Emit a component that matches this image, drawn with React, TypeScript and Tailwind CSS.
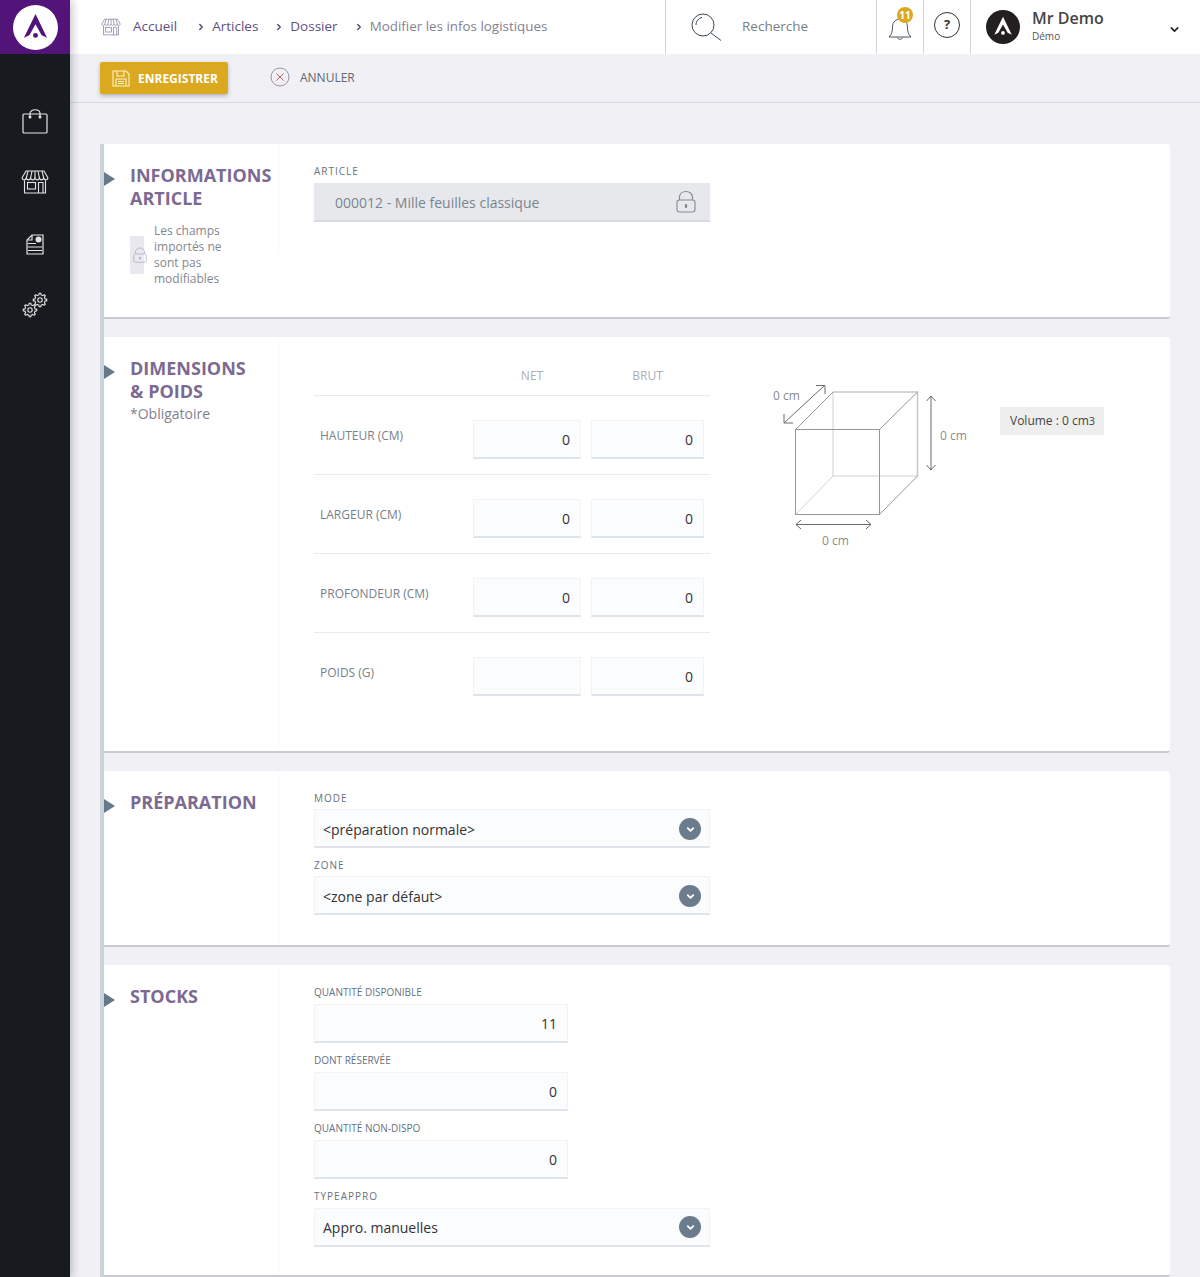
import { ChevronDown, ChevronRight } from "lucide-react";
import type { ReactNode } from "react";

function Logo({ size, fill, bg }: { size: number; fill: string; bg: string }) {
  return (
    <svg width={size} height={size} viewBox="0 0 44 44">
      <circle cx="22" cy="22" r="22" fill={bg} />
      <path d="M22 8.7 L33.3 32 L28 29.5 L22 18.7 L16 29.5 L10.7 32 Z" fill={fill} />
      <circle cx="22" cy="29.7" r="2.4" fill={fill} />
    </svg>
  );
}

function StoreIcon({ size, color }: { size: number; color: string }) {
  return (
    <svg width={size} height={size} viewBox="0 0 28 24" fill="none" stroke={color} strokeWidth="1.1">
      <path d="M5 1 H23 L27 8 C26 10.5 23.5 10.5 22.7 8 C22 10.5 19 10.5 18.4 8 C17.5 10.5 15 10.5 14 8 C13 10.5 10.5 10.5 9.6 8 C9 10.5 6 10.5 5.3 8 C4.5 10.5 2 10.5 1 8 Z" />
      <path d="M9.6 8 L11 1 M18.4 8 L17 1 M5.3 8 L7 1 M22.7 8 L21 1 M14 8 V1" />
      <path d="M3.5 10.5 V23 H24.5 V10.5" />
      <rect x="6.5" y="12.5" width="8" height="6.5" />
      <path d="M17.5 23 V12.5 H22 V23" />
    </svg>
  );
}

function BagIcon() {
  return (
    <svg width="26" height="25" viewBox="0 0 26 25" fill="none" stroke="#e4e4e4" strokeWidth="1.2">
      <rect x="1" y="5" width="24" height="19" rx="1" />
      <path d="M8 7.5 V4.5 C8 -0.5 18 -0.5 18 4.5 V7.5" />
      <circle cx="8" cy="8" r="0.9" fill="#e4e4e4" />
      <circle cx="18" cy="8" r="0.9" fill="#e4e4e4" />
    </svg>
  );
}

function InvoiceIcon() {
  return (
    <svg width="18" height="21" viewBox="0 0 18 21" fill="none" stroke="#e4e4e4" strokeWidth="1.2">
      <path d="M6 1 H17 V20 H1 V6 Z" />
      <path d="M6 1 V6 H1" />
      <path d="M2 9.5 H10 M2 13 H16 M2 16.5 H16" />
      <circle cx="12.5" cy="5.5" r="3" fill="#e4e4e4" stroke="none" />
    </svg>
  );
}

function gearPath(cx: number, cy: number) {
  const teeth = 8;
  const points: string[] = [];
  for (let i = 0; i < teeth; i++) {
    const a = (i / teeth) * Math.PI * 2;
    const step = Math.PI / teeth;
    [
      [5.2, a - step * 0.55],
      [6.8, a - step * 0.3],
      [6.8, a + step * 0.3],
      [5.2, a + step * 0.55],
    ].forEach(([r, t]) => {
      points.push(`${(cx + r * Math.cos(t)).toFixed(2)} ${(cy + r * Math.sin(t)).toFixed(2)}`);
    });
  }
  return `M${points.join(" L")} Z`;
}

function GearsIcon() {
  return (
    <svg width="26" height="26" viewBox="0 0 26 26" fill="none" stroke="#e4e4e4" strokeWidth="1.1">
      <path d={gearPath(18, 8)} />
      <circle cx="18" cy="8" r="2.2" />
      <path d={gearPath(8, 18)} />
      <circle cx="8" cy="18" r="2.2" />
    </svg>
  );
}

function LockIcon({ w, h, color }: { w: number; h: number; color: string }) {
  return (
    <svg width={w} height={h} viewBox="0 0 20 23" fill="none" stroke={color} strokeWidth="1.1" className="shrink-0">
      <path d="M3.5 10 V7.5 C3.5 -0.5 16.5 -0.5 16.5 7.5 V10" />
      <rect x="1" y="10" width="18" height="12" rx="2.5" />
      <rect x="8.8" y="14" width="2.4" height="4" rx="1" fill={color} stroke="none" />
    </svg>
  );
}

function SaveIcon() {
  return (
    <svg width="18" height="17" viewBox="0 0 18 17" fill="none" stroke="#fdf3c8" strokeWidth="1.1">
      <path d="M1 1 H14 L17 4 V16 H1 Z" />
      <path d="M5 1 V6 H12 V1" />
      <path d="M4 9 H14 V16 M4 9 V16 M6 11.5 H12 M6 13.5 H12" />
    </svg>
  );
}

function Sidebar() {
  return (
    <aside className="w-[70px] shrink-0 bg-[#171b1f] shadow-[3px_0_8px_rgba(0,0,0,0.2)] z-10">
      <div className="h-[54px] bg-[#53147a] flex items-center justify-center">
        <Logo size={45} fill="#53147a" bg="#ffffff" />
      </div>
      <nav className="flex flex-col items-center">
        <div className="h-[25px] mt-[55px] flex items-center"><BagIcon /></div>
        <div className="h-[28px] mt-[34px] flex items-center"><StoreIcon size={28} color="#e4e4e4" /></div>
        <div className="h-[21px] mt-[38px] flex items-center"><InvoiceIcon /></div>
        <div className="h-[26px] mt-[37px] flex items-center"><GearsIcon /></div>
      </nav>
    </aside>
  );
}

function Crumb({ label, muted }: { label: string; muted?: boolean }) {
  return (
    <>
      <ChevronRight size={10} strokeWidth={3} className="text-[#4a3a6a] mr-[6px]" />
      <span className={muted ? "text-[#857f92]" : "text-[#5f4f80]"}>{label}</span>
    </>
  );
}

function Header() {
  return (
    <header className="h-[54px] bg-white flex items-stretch text-[13.5px]">
      <div className="w-[595px] flex items-center pl-[31px] pb-[1px]">
        <StoreIcon size={20} color="#8d84a5" />
        <span className="ml-[12px] text-[#5f4f80] mr-[19px]">Accueil</span>
        <Crumb label="Articles" />
        <span className="w-[16px]" />
        <Crumb label="Dossier" />
        <span className="w-[16px]" />
        <span className="contents text-[13.4px]">
          <Crumb label="Modifier les infos logistiques" muted />
        </span>
      </div>
      <div className="w-[211px] border-l border-[#cdd5dc] flex items-center pl-[25px] pb-[1px]">
        <svg width="31" height="28" viewBox="0 0 31 28" fill="none" stroke="#3f4a55" strokeWidth="1">
          <circle cx="12" cy="12" r="11" />
          <path d="M20 20 L30 27.5" />
          <path d="M5 12 C5 8 8 5 11 4.5" />
        </svg>
        <span className="ml-[20px] text-[#76808a]">Recherche</span>
      </div>
      <div className="w-[47px] border-l border-[#cdd5dc] relative flex items-center justify-center">
        <svg width="24" height="24" viewBox="0 0 24 24" fill="none" stroke="#4a5560" strokeWidth="1" className="mt-[3px]">
          <path d="M1 20 C4 17 4.5 14 4.5 10 C4.5 5 8 2 12 2 C16 2 19.5 5 19.5 10 C19.5 14 20 17 23 20 Z" />
          <path d="M9.5 20.5 C10 23 14 23 14.5 20.5" />
        </svg>
        <span className="absolute left-[20px] top-[7px] w-[16px] h-[16px] rounded-full bg-[#daa920] text-white text-[10px] font-bold flex items-center justify-center">11</span>
      </div>
      <div className="w-[47px] border-l border-[#cdd5dc] flex items-center justify-center">
        <span className="w-[26px] h-[26px] -mt-[4px] rounded-full border border-[#333] text-[#333] text-[13px] font-bold flex items-center justify-center">?</span>
      </div>
      <div className="flex-1 border-l border-[#cdd5dc] flex items-center pl-[15px] relative">
        <Logo size={34} fill="#ffffff" bg="#231f20" />
        <div className="ml-[12px] -mt-[4px]">
          <div className="text-[16px] leading-[21px] font-semibold text-[#454545]">Mr Demo</div>
          <div className="text-[10px] leading-[14px] text-[#555]">Démo</div>
        </div>
        <ChevronDown size={13} strokeWidth={3} className="absolute left-[197px] top-[23px] text-[#222]" />
      </div>
    </header>
  );
}

function Toolbar() {
  return (
    <div className="h-[49px] border-b border-[#d3d9df] flex items-start pl-[30px] pt-[8px]">
      <button className="w-[128px] h-[32px] bg-[#daa920] rounded-[2px] shadow-[0_2px_4px_rgba(0,0,0,0.25)] flex items-center pl-[12px] text-white text-[12px] font-bold">
        <SaveIcon />
        <span className="ml-[8px] mt-[1px]">ENREGISTRER</span>
      </button>
      <div className="flex items-center ml-[42px] h-[30px] text-[12px] text-[#5f6670]">
        <svg width="20" height="20" viewBox="0 0 20 20" fill="none" stroke="#9a8fa8" strokeWidth="1">
          <circle cx="10" cy="10" r="9" />
          <path d="M6.5 6.5 L13.5 13.5 M13.5 6.5 L6.5 13.5" stroke="#b5606a" />
        </svg>
        <span className="ml-[10px] mt-[2px]">ANNULER</span>
      </div>
    </div>
  );
}

function Card({ title, height, sub, ruleHeight, children }: { title: ReactNode; height: string; sub?: ReactNode; ruleHeight?: string; children: ReactNode }) {
  return (
    <section className={`${height} bg-white rounded-br-[3px] rounded-tr-[3px] border-b-2 border-[#cbc9d0] flex`}>
      <div className={`w-[175px] shrink-0 border-r border-[#f8f8fa] pt-[20px] flex items-start ${ruleHeight ?? ""}`}>
        <span className="w-0 h-0 mt-[8px] border-y-[7px] border-y-transparent border-l-[11px] border-l-[#65798a]" />
        <div className="ml-[15px] whitespace-nowrap">
          <h2 className="text-[18px] leading-[23px] font-bold text-[#7c6a92]">{title}</h2>
          {sub}
        </div>
      </div>
      <div className="flex-1 pl-[35px] pt-[21px]">{children}</div>
    </section>
  );
}

function Label({ text, compact, plain }: { text: string; compact?: boolean; plain?: boolean }) {
  return (
    <div className={`${compact ? "h-[17px]" : "h-[18px]"} ${plain ? "tracking-normal" : "tracking-[1px]"} text-[10px] leading-[12px] text-[#667180] uppercase`}>
      {text}
    </div>
  );
}

function NumberBox({ value, width }: { value: string; width: string }) {
  return (
    <div className={`${width} h-[39px] bg-[#fbfcfe] border border-[#f1f3f6] border-b-2 border-b-[#dfe4ea] flex items-center justify-end pr-[10px] text-[14px] text-[#333]`}>
      {value}
    </div>
  );
}

function Select({ label, value, compact }: { label: string; value: string; compact?: boolean }) {
  return (
    <div className="w-[396px] mb-[11px]">
      <Label text={label} compact={compact} />
      <div className={`h-[39px] bg-[#fbfcfe] border border-[#f1f3f6] border-b-2 border-b-[#dfe4ea] flex items-center justify-between pl-[8px] pr-[8px] text-[14px] text-[#333] ${compact ? "pt-[2px]" : ""}`}>
        <span>{value}</span>
        <span className="w-[22px] h-[22px] rounded-full bg-[#6b7d8c] flex items-center justify-center">
          <ChevronDown size={11} strokeWidth={4} className="text-white" />
        </span>
      </div>
    </div>
  );
}

const dimensionRows = [
  { label: "HAUTEUR (CM)", net: "0", brut: "0" },
  { label: "LARGEUR (CM)", net: "0", brut: "0" },
  { label: "PROFONDEUR (CM)", net: "0", brut: "0" },
  { label: "POIDS (G)", net: "", brut: "0" },
];

function DimensionTable() {
  return (
    <div className="w-[396px] shrink-0">
      <div className="h-[38px] border-b border-[#e8eaed] flex text-[12px] text-[#a9b0b8] pl-[159px]">
        <span className="w-[118px] text-center pt-[9px]">NET</span>
        <span className="w-[113px] text-center pt-[9px]">BRUT</span>
      </div>
      {dimensionRows.map((row, i) => (
        <div key={row.label} className={`h-[79px] pt-[24px] flex ${i < 3 ? "border-b border-[#e8eaed]" : ""}`}>
          <span className="w-[159px] pl-[6px] text-[12px] leading-[32px] text-[#77808a]">{row.label}</span>
          <NumberBox value={row.net} width="w-[108px]" />
          <span className="w-[10px]" />
          <NumberBox value={row.brut} width="w-[113px]" />
        </div>
      ))}
    </div>
  );
}

function CubeDiagram() {
  return (
    <svg width="200" height="175" viewBox="0 0 200 175" fill="none" className="ml-[60px] mt-[22px] shrink-0">
      <g stroke="#d0d0d0">
        <path d="M63 12 V96 H148" />
        <path d="M63 96 L25.5 134.5" />
        <path d="M63 12 H147.5 V96" strokeWidth="1.5" stroke="#c8c8c8" />
      </g>
      <g stroke="#969696">
        <rect x="25.5" y="49.5" width="84" height="85" />
        <path d="M25.5 49.5 L63 12 M109.5 49.5 L147.5 12 M109.5 134.5 L147.5 96" />
      </g>
      <g stroke="#6a6a6a">
        <path d="M14 43 L55 5 M46 5.5 H55 V14 M14 34 V43 H23" />
        <path d="M161 16 V90 M156.5 21 L161 16 L165.5 21 M156.5 85 L161 90 L165.5 85" />
        <path d="M26 144.5 H101 M31 140 L26 144.5 L31 149 M96 140 L101 144.5 L96 149" />
      </g>
      <g fill="#8b8b8b" fontSize="12">
        <text x="3" y="20">0 cm</text>
        <text x="170" y="60">0 cm</text>
        <text x="52" y="165">0 cm</text>
      </g>
    </svg>
  );
}

const stockFields = [
  { label: "Quantité disponible", value: "11" },
  { label: "Dont réservée", value: "0" },
  { label: "Quantité non-dispo", value: "0" },
];

function App() {
  return (
    <div className="w-[1200px] h-[1277px] overflow-hidden flex bg-[#f1f0f5] font-['Open_Sans',sans-serif]">
      <Sidebar />
      <div className="flex-1 min-w-0 flex flex-col">
        <Header />
        <Toolbar />
        <main className="flex-1 ml-[30px] mr-[30px] mt-[41px] border-l-4 border-[#c9d3da] flex flex-col gap-[18px]">
          <Card
            height="h-[175px]"
            ruleHeight="h-[108px]"
            title={<>INFORMATIONS<br />ARTICLE</>}
            sub={
              <div className="flex items-center mt-[13px] font-normal">
                <span className="w-[14px] h-[38px] bg-[#e9e8ee] flex items-center pl-[3px]">
                  <LockIcon w={14} h={16} color="#a9aec6" />
                </span>
                <p className="ml-[10px] text-[12px] leading-[16px] text-[#84888e]">
                  Les champs<br />importés ne<br />sont pas<br />modifiables
                </p>
              </div>
            }
          >
            <Label text="Article" />
            <div className="w-[396px] h-[39px] bg-[#e6e8ec] border-b-2 border-b-[#d5dbe1] flex items-center justify-between pl-[21px] pr-[14px] text-[14px] text-[#7b858f]">
              <span className="pt-[1px]">000012 - Mille feuilles classique</span>
              <LockIcon w={20} h={23} color="#808a96" />
            </div>
          </Card>

          <Card
            height="h-[416px]"
            title={<>DIMENSIONS<br />&amp; POIDS</>}
            sub={<div className="text-[14px] leading-[21px] font-normal text-[#85808e]">*Obligatoire</div>}
          >
            <div className="flex items-start">
              <DimensionTable />
              <CubeDiagram />
              <div className="ml-[30px] mt-[49px] h-[28px] pl-[10px] pr-[9px] bg-[#eeeeee] text-[12px] leading-[28px] text-[#444] whitespace-nowrap">
                Volume : 0 cm<span className="text-[11px]">3</span>
              </div>
            </div>
          </Card>

          <Card height="h-[176px]" title="PRÉPARATION">
            <Select compact label="Mode" value="<préparation normale>" />
            <Select compact label="Zone" value="<zone par défaut>" />
          </Card>

          <Card height="h-[312px]" title="STOCKS">
            {stockFields.map((f) => (
              <div key={f.label} className="w-[254px] mb-[11px]">
                <Label plain text={f.label} />
                <NumberBox value={f.value} width="w-full" />
              </div>
            ))}
            <Select label="TypeAppro" value="Appro. manuelles" />
          </Card>
        </main>
      </div>
    </div>
  );
}

export default App;
